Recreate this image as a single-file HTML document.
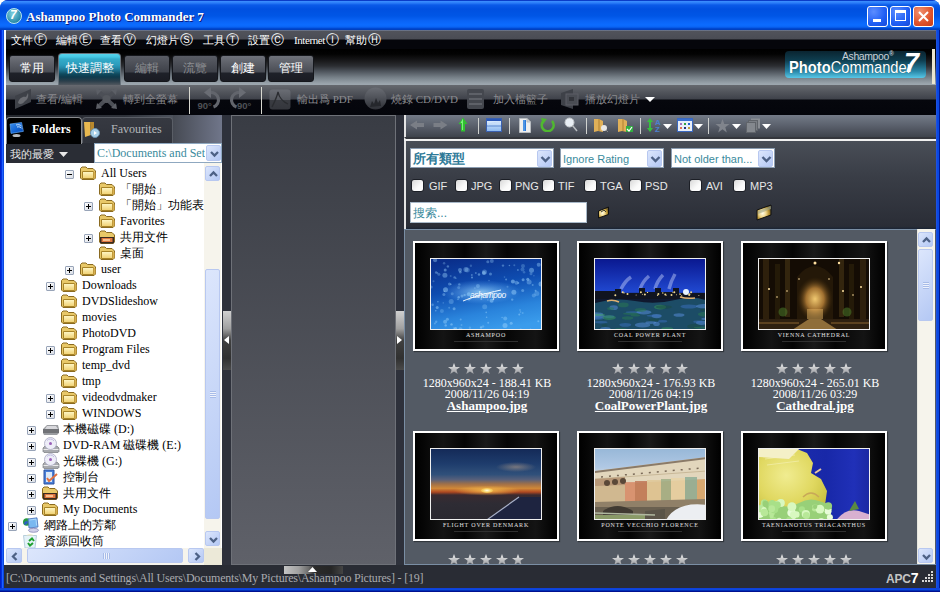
<!DOCTYPE html>
<html><head><meta charset="utf-8">
<style>
*{margin:0;padding:0;box-sizing:border-box}
html,body{width:940px;height:592px;overflow:hidden;background:#fff}
body{position:relative;font-family:"Liberation Sans",sans-serif;font-size:12px}
.a{position:absolute}
#win{left:0;top:0;width:940px;height:592px;background:#0055e5;border-radius:8px 8px 0 0;overflow:hidden}
#title{left:0;top:0;width:940px;height:30px;background:linear-gradient(#0a3cc8 0px,#0a3cc8 1px,#3d90ff 1px,#2a7cf8 3px,#0a5ae8 5px,#0050e0 9px,#0056e6 16px,#0a64f6 21px,#0c6cff 25px,#0a64f4 27px,#0048d0 28.5px,#003cb8 30px)}
#wtxt{left:26px;top:9px;font-family:"Liberation Serif",serif;font-weight:bold;font-size:13px;color:#fff;text-shadow:1px 1px 0 #0a1a80;}
.wb{top:6px;width:21px;height:21px;border:1px solid #fff;border-radius:3px;background:radial-gradient(circle at 30% 25%,#5c8dff,#1f5ef4 60%,#1648d8)}
#client{left:4px;top:30px;width:932px;height:558px;background:#1b1d24}
#menu{left:4px;top:30px;width:932px;height:19px;background:linear-gradient(#8090b0 0px,#51535b 1px,#4a4c54 9px,#05060b 10px,#05060b 19px)}
.mi{top:34px;color:#fff;font-size:11px;line-height:12px;white-space:nowrap}
.mi i{font-style:normal;font-size:12.5px;margin-left:0.5px}
#tabbar{left:4px;top:49px;width:932px;height:36px;background:linear-gradient(#000 0px,#030303 5px,#1a1a1c 12px,#2c2e32 17px,#4c525a 22px,#7a848c 29px,#9ca6ae 35px,#9ca6ae 36px)}
.tab{top:55px;height:27px;border:1px solid #15171c;border-radius:3px;background:linear-gradient(#70737b 0px,#5c5f67 8px,#4a4d55 16px,#1e2129 17px,#1a1c23 25px);color:#fff;font-size:12px;text-align:center;line-height:25px}
.tab.dis{color:#8a8c90;background:linear-gradient(#5a5d65 0px,#4c4f57 8px,#3e4149 16px,#1e2129 17px,#1a1c23 25px)}
#tbar{left:4px;top:85px;width:932px;height:30px;background:linear-gradient(#66696f 0px,#52555c 7px,#3f424a 14px,#06070d 15px,#04050b 30px)}
.tbt{top:92px;color:#8a8a8e;font-size:11px;white-space:nowrap}
#white4{left:4px;top:30px;width:2px;height:535px;background:#f8fcff}
#lhead{left:5px;top:115px;width:217px;height:28px;background:linear-gradient(90deg,#23262d 0px,#2e323a 120px,#6c7380 217px)}
#ldd{left:5px;top:143px;width:217px;height:20px;background:#2a2d35}
#tree{left:5px;top:163px;width:217px;height:402px;background:#fff}
#lstrip{left:222px;top:115px;width:9px;height:450px;background:#2e313b}
#mid{left:231px;top:115px;width:165px;height:450px;background:linear-gradient(#393c44,#5f6169);border:1px solid #6e7178}
#rstrip{left:396px;top:115px;width:8px;height:450px;background:#2e313b}
#rtool{left:404px;top:115px;width:532px;height:22px;background:linear-gradient(#747b88 0px,#5c626e 10px,#3e434c 22px);border-left:2px solid #e4e4e4}
#filter{left:404px;top:137px;width:532px;height:92px;background:linear-gradient(#4a4f58 0%,#3a3e47 40%,#2a2d36 97%,#1a2434 100%);border-top:2px solid #34363c;border-left:2px solid #e4e4e4}
#thumbs{left:404px;top:229px;width:532px;height:336px;background:#535a64;border-left:1px solid #7a8ea4;border-top:1px solid #7a8ea4;border-bottom:1px solid #7a8ea4}
#status{left:4px;top:565px;width:932px;height:23px;background:#292c34}

.tt{font:12px/16px "Liberation Serif",serif;color:#000;white-space:nowrap}
.exp{width:9px;height:9px;border:1px solid #98a4b8;border-radius:1px;background:linear-gradient(135deg,#fff,#d8dce4)}
.exp i{position:absolute;left:1px;top:3px;width:5px;height:1px;background:#000}
.exp b{position:absolute;left:3px;top:1px;width:1px;height:5px;background:#000}
.xpb{border:1px solid #b8c8f0;border-radius:2px;background:linear-gradient(135deg,#dce6fc,#b4c8f4)}

.cmb{background:#fff;border:1px solid #8a9cb0}
.ctx{font-size:11px;color:#3a8a9c;white-space:nowrap}
.chk{width:13px;height:13px;border:1px solid #1c1f26;border-radius:3px;background:linear-gradient(135deg,#d8d8d8,#fafafa 60%,#fff)}
.cl{font-size:11px;color:#e8e8e8}

.frm{width:146px;height:110px;border:2px solid #fff;background:linear-gradient(90deg,#000 0%,#141414 20%,#050505 35%,#1a1a1a 50%,#060606 65%,#141414 85%,#000 100%);box-shadow:1px 1px 1px rgba(0,0,0,.4)}
.pho{left:15px;top:15px;width:112px;height:72px;border:1px solid #f0f0f0;overflow:hidden}
.cap{left:0;top:89px;width:142px;text-align:center;font:6px 'Liberation Serif',serif;color:#e0e0e0;letter-spacing:0.8px}
.cap2{left:39px;top:98px;width:64px;height:1px;background:#303030}
.stars{font-size:13px;color:#c8c8c8;letter-spacing:2px;line-height:12px}
.inf{width:188px;text-align:center;font:12px/11px 'Liberation Serif',serif;color:#fff}
.inf u b{font-weight:bold;font-size:13px}
.hdl{width:8px;height:59px;background:linear-gradient(#d0d0d0 0%,#a0a0a0 30%,#404040 50%,#303030 80%,#4a4a4a 100%)}
</style></head><body>
<svg width="0" height="0" style="position:absolute">
<defs>
<linearGradient id="sg" x1="0" y1="0" x2="0" y2="1"><stop offset="0" stop-color="#f0f0f0"/><stop offset="1" stop-color="#9a9ca0"/></linearGradient>
<linearGradient id="fg" x1="0" y1="0" x2="0" y2="1"><stop offset="0" stop-color="#fff8c8"/><stop offset="1" stop-color="#f0d070"/></linearGradient>
<symbol id="if" viewBox="0 0 18 16"><path d="M0.5 3.5L2 2H6L7.5 3.5H13L15.5 6V13L14 14.5H2L0.5 13Z" fill="#e8c868" stroke="#8a6a20"/><path d="M2.5 6.5H13.5V13.5H2.5Z" fill="url(#fg)" stroke="#a88428"/><path d="M13.5 6.5L15.5 7.5V13L13.5 13.5Z" fill="#d8b050"/></symbol>
<symbol id="is" viewBox="0 0 18 16"><path d="M0.5 3.5L2 2H6L7.5 3.5H13L15.5 6V13L14 14.5H2L0.5 13Z" fill="#e8c868" stroke="#8a6a20"/><path d="M1 8H15V14.5H1Z" fill="#3a2a20"/><path d="M2.5 9H13.5V13H2.5Z" fill="#e07840"/><path d="M4 10H11V12H4Z" fill="#f8c090"/></symbol>
<symbol id="ih" viewBox="0 0 18 16"><path d="M1 8L5 4H16L17 8V12L15 14H2L1 12Z" fill="#9a9ca0"/><path d="M1 8H17V12H1Z" fill="#707276"/><path d="M5 5H14L16 8H3Z" fill="#d8d8dc"/></symbol>
<symbol id="ic" viewBox="0 0 18 16"><path d="M1 11L3 9H15L17 11V14.5L16 15.5H2L1 14.5Z" fill="#a8aaae" stroke="#6a6c70" stroke-width="0.6"/><path d="M1.5 12.5H16.5" stroke="#eaeaea"/><circle cx="8.5" cy="6.5" r="6" fill="#eeeef8" stroke="#a8a8c0" stroke-width="0.8"/><path d="M5 3.5A4.5 4.5 0 0 1 12 4" stroke="#c0c0e0" stroke-width="1" fill="none"/><circle cx="8.5" cy="6.5" r="1.5" fill="#9a60b8"/></symbol>
<symbol id="ip" viewBox="0 0 18 16"><path d="M2 1H12V15H2Z" fill="#4a80d8" stroke="#2a50a0"/><path d="M4 3H10V13H4Z" fill="#dce8f8"/><path d="M5 9L7 12L15 5" stroke="#e07040" stroke-width="2" fill="none"/></symbol>
<symbol id="in" viewBox="0 0 18 16"><circle cx="3.8" cy="5" r="3.8" fill="#2a9a40"/><path d="M1 6C2 4 4 3 5 5C5 7 3 8 1.5 8" fill="#2a60c0"/><path d="M5 2L14 0.8L15 10L6 11Z" fill="#7ab8f0" stroke="#4a70b8" stroke-width="0.8"/><path d="M6.5 3L13 2.2L13.6 8.5" fill="none" stroke="#b8e0ff" stroke-width="0.8"/><ellipse cx="10.5" cy="13.3" rx="5" ry="2" fill="#d0d0e8" stroke="#8a88b8" stroke-width="0.8"/></symbol>
<symbol id="ir" viewBox="0 0 18 16"><path d="M0.5 2.5H13.5L12 15H2Z" fill="#e4f2f8" stroke="#a8c4d4" stroke-width="0.8"/><path d="M3 2.5Q7 0 11 2.5" fill="#f0e8c0"/><path d="M6 8L9 5.5L11 8M10 10L7 12.5L5 10" stroke="#20a030" stroke-width="2" fill="none"/></symbol>
<symbol id="ib" viewBox="0 0 14 14"><path d="M0 0H14" /></symbol>
</defs></svg>
<div id="win" class="a">
 <div id="title" class="a"></div>
 <div id="wtxt" class="a">Ashampoo Photo Commander 7</div>
 <div class="a wb" style="left:867px"></div>
 <div class="a wb" style="left:890px"></div>
 <div class="a wb" style="left:913px;background:radial-gradient(circle at 30% 25%,#f09070,#e0522a 60%,#c83c18)"></div>

 <div class="a" style="left:0;top:30px;width:4px;height:562px;background:linear-gradient(90deg,#0020c8 0,#0020c8 1px,#0030e0 1px,#0030e0 2px,#2060ff 2px,#2060ff 3px,#0a48e0 3px)"></div>
 <div class="a" style="left:936px;top:30px;width:4px;height:562px;background:linear-gradient(90deg,#2050e0 0,#2050e0 1px,#0a48e0 1px,#0a48e0 3px,#001890 3px)"></div>
 <div class="a" style="left:0;top:588px;width:940px;height:4px;background:linear-gradient(#1040d8 0,#1040d8 1px,#0a48e0 1px,#0a48e0 2px,#0030b8 2px,#0030b8 3px,#001090 3px)"></div>
 <div id="client" class="a"></div>
 <div id="menu" class="a"></div>
 <div id="tabbar" class="a"></div>
 <div id="tbar" class="a"></div>
 <div id="lhead" class="a"></div>
 <div id="ldd" class="a"></div>
 <div id="tree" class="a"></div>
 <div id="lstrip" class="a"></div>
 <div id="mid" class="a"></div>
 <div id="rstrip" class="a"></div>
 <div id="rtool" class="a"></div>
 <div id="filter" class="a"></div>
 <div id="thumbs" class="a"></div>
 <div id="status" class="a"></div>

 <!-- app icon -->
 <div class="a" style="left:6px;top:8px;width:16px;height:16px;border-radius:50%;background:radial-gradient(circle at 40% 35%,#7fd0e0,#2a8aa8 70%,#1e6a88);border:1px solid #b8e4f0"></div>
 <div class="a" style="left:10px;top:8px;width:10px;font:bold 12px 'Liberation Sans',sans-serif;color:#fff;font-style:italic">7</div>
 <!-- window buttons glyphs -->
 <div class="a" style="left:873px;top:19px;width:8px;height:3px;background:#fff"></div>
 <div class="a" style="left:895px;top:10px;width:11px;height:11px;border:1px solid #fff;border-top-width:3px"></div>
 <svg class="a" style="left:913px;top:6px" width="21" height="21"><path d="M6 6L15 15M15 6L6 15" stroke="#fff" stroke-width="2"/></svg>
 <!-- menu -->
 <div class="a mi" style="left:11px">文件<i>Ⓕ</i></div>
 <div class="a mi" style="left:56px">編輯<i>Ⓔ</i></div>
 <div class="a mi" style="left:100px">查看<i>Ⓥ</i></div>
 <div class="a mi" style="left:146px">幻燈片<i>Ⓢ</i></div>
 <div class="a mi" style="left:203px">工具<i>Ⓣ</i></div>
 <div class="a mi" style="left:248px">設置<i>Ⓒ</i></div>
 <div class="a mi" style="left:294px;font-family:'Liberation Serif',serif;font-size:11px;letter-spacing:-0.4px">Internet<i>Ⓘ</i></div>
 <div class="a mi" style="left:345px">幫助<i>Ⓗ</i></div>
 <!-- tabs -->
 <div class="a tab" style="left:9px;width:46px">常用</div>
 <div class="a tab" style="left:58px;top:53px;width:63px;height:32px;border:1px solid #0e4050;border-bottom:none;border-radius:4px 4px 0 0;border-color:#68737c;background:linear-gradient(#58d4ec 0px,#44c8e4 3px,#34acca 5px,#2c9cbc 11px,#2488a8 14px,#186078 18px,#0f4a5e 20px,#0e3a4c 23px,#2a3e4a 27px,#52585f 31px,#62656d 32px);line-height:28px">快速調整</div>
 <div class="a tab dis" style="left:124px;width:46px">編輯</div>
 <div class="a tab dis" style="left:172px;width:46px">流覽</div>
 <div class="a tab" style="left:220px;width:46px">創建</div>
 <div class="a tab" style="left:268px;width:46px">管理</div>
 <!-- toolbar -->
 <svg class="a" style="left:14px;top:88px" width="18" height="22"><path d="M1 8L17 1V14L1 21Z" fill="#3e4148"/><path d="M4 15C5 10 9 8 12 9L14 5C15 9 13 12 11 13C9 16 6 17 4 15Z" fill="#6a6c72"/></svg>
 <svg class="a" style="left:95px;top:88px" width="23" height="22"><path d="M3 3L20 19M20 3L3 19" stroke="#4c4f56" stroke-width="4"/><path d="M1 1L7 2L2 7ZM22 1L16 2L21 7ZM1 21L7 20L2 15ZM22 21L16 20L21 15Z" fill="#5c5f66"/><circle cx="11.5" cy="11" r="4" fill="#55585e"/></svg>
 <svg class="a" style="left:196px;top:86px" width="26" height="25"><path d="M14 6.5A7.5 7.5 0 0 1 17.5 21" stroke="#62656c" stroke-width="3.2" fill="none"/><path d="M8 6.5L15 1V12Z" fill="#6a6d74"/><text x="1.5" y="22.5" font-family="Liberation Sans" font-size="9.5" font-weight="bold" fill="#4e5156">90°</text></svg>
 <svg class="a" style="left:227px;top:86px" width="27" height="25"><path d="M13 6.5A7.5 7.5 0 0 0 9.5 21" stroke="#62656c" stroke-width="3.2" fill="none"/><path d="M19 6.5L12 1V12Z" fill="#6a6d74"/><text x="10" y="22.5" font-family="Liberation Sans" font-size="9.5" font-weight="bold" fill="#4e5156">90°</text></svg>
 <svg class="a" style="left:269px;top:89px" width="22" height="21"><defs><linearGradient id="pg" x1="0" y1="0" x2="0" y2="1"><stop offset="0" stop-color="#6a6d74"/><stop offset="0.5" stop-color="#55585f"/><stop offset="0.52" stop-color="#3a3c42"/><stop offset="1" stop-color="#34363c"/></linearGradient></defs><rect x="0.5" y="0.5" width="21" height="20" rx="3" fill="url(#pg)"/><path d="M3 18C5 14 8 8 9 3C10 8 14 13 19 15" stroke="#2a2c30" stroke-width="1.3" fill="none"/></svg>
 <svg class="a" style="left:364px;top:87px" width="23" height="23"><defs><linearGradient id="cg" x1="0" y1="0" x2="0" y2="1"><stop offset="0" stop-color="#6a6d74"/><stop offset="0.55" stop-color="#4a4d54"/><stop offset="1" stop-color="#2e3036"/></linearGradient></defs><circle cx="11.5" cy="11.5" r="11" fill="url(#cg)"/><path d="M6 20L8 14L10 17L12 11L14 16L16 13L17 19Z" fill="#25272c"/></svg>
 <svg class="a" style="left:466px;top:88px" width="19" height="22"><rect x="1" y="1" width="17" height="20" rx="2" fill="#44474e"/><path d="M3 6H16M3 11H16M3 16H16" stroke="#5e6168" stroke-width="2"/></svg>
 <svg class="a" style="left:560px;top:88px" width="20" height="22"><path d="M1 5L13 1V21L1 17Z" fill="#3e4148"/><rect x="6" y="6" width="12" height="11" fill="#4a4d54" stroke="#5c5f66"/><rect x="9" y="9" width="5" height="4" fill="#33353b"/></svg>

 <div class="a tbt" style="left:36px">查看/編輯</div>
 <div class="a tbt" style="left:123px">轉到全螢幕</div>
 <div class="a" style="left:189px;top:87px;width:1px;height:27px;background:#d8d8d0"></div>
 <div class="a" style="left:261px;top:87px;width:1px;height:27px;background:#d8d8d0"></div>
 <div class="a tbt" style="left:297px;font-family:'Liberation Serif',serif">輸出爲 PDF</div>
 <div class="a tbt" style="left:391px;font-family:'Liberation Serif',serif">燒錄 CD/DVD</div>
 <div class="a tbt" style="left:493px">加入檔籃子</div>
 <div class="a tbt" style="left:585px">播放幻燈片</div>
 <svg class="a" style="left:645px;top:97px" width="10" height="5"><path d="M0 0H10L5 5Z" fill="#fff"/></svg>

 <!-- left panel -->
 <div class="a" style="left:173px;top:115px;width:49px;height:28px;background:linear-gradient(90deg,#464a53,#70768a)"></div>
 <div class="a" style="left:6px;top:117px;width:76px;height:27px;background:#000;border:1px solid #8a8c90;border-bottom:none;border-radius:4px 4px 0 0"></div>
 <div class="a" style="left:82px;top:117px;width:91px;height:26px;background:linear-gradient(#363941,#30333b);border:1px solid #5a5e66;border-bottom:none;border-radius:4px 4px 0 0"></div>
 <svg class="a" style="left:9px;top:121px" width="17" height="17"><defs><linearGradient id="mg" x1="0" y1="0" x2="1" y2="1"><stop offset="0" stop-color="#3a90f0"/><stop offset="0.6" stop-color="#1060d0"/><stop offset="1" stop-color="#0a48b0"/></linearGradient></defs><path d="M1 3L12.6 1.5L14.4 10.4L2 12.4Z" fill="url(#mg)" stroke="#6ab0f8" stroke-width="0.6"/><path d="M7 4C9 3.5 11 3.5 12.5 5M8 6C10 5.5 12 6 13 7.5" stroke="#e0f4ff" stroke-width="0.9" fill="none"/><ellipse cx="7.5" cy="14.5" rx="4" ry="1.6" fill="#b8bcc0"/></svg>
 <div class="a" style="left:32px;top:122px;font:bold 12px 'Liberation Serif',serif;color:#fff">Folders</div>
 <svg class="a" style="left:83px;top:122px" width="17" height="17"><path d="M1 0H7L8 13L2 15Z" fill="#e8b850"/><path d="M7 0H11V12L8 13Z" fill="#b8882c"/><circle cx="12" cy="11" r="4.5" fill="#a8d0e8" stroke="#6890b0"/><path d="M11 9L14 11L11 13Z" fill="#fff"/></svg>
 <div class="a" style="left:111px;top:122px;font:12px 'Liberation Serif',serif;color:#b4b6ba">Favourites</div>
 <div class="a" style="left:10px;top:147px;font-size:11px;color:#e8e8e8">我的最愛</div>
 <svg class="a" style="left:59px;top:152px" width="9" height="5"><path d="M0 0H9L4.5 5Z" fill="#e8e8e8"/></svg>
 <div class="a" style="left:94px;top:143px;width:128px;height:20px;background:#fff;border:1px solid #8fa8c0"></div>
 <div class="a" style="left:97px;top:146px;width:108px;overflow:hidden;white-space:nowrap;font:12px 'Liberation Serif',serif;color:#3a8a9c">C:\Documents and Settings</div>
 <div class="a xpb" style="left:206px;top:145px;width:15px;height:16px"><svg width="15" height="16"><path d="M4 6L7.5 9.5L11 6" stroke="#4d6185" stroke-width="2.3" fill="none"/></svg></div>
 <div class="a" style="left:5px;top:163px;width:199px;height:385px;overflow:hidden">
<div class="a exp" style="left:60px;top:7px"><i></i></div>
<svg class="a" style="left:75px;top:2px" width="18" height="16"><use href="#if"/></svg>
<div class="a tt" style="left:96px;top:2px">All Users</div>
<svg class="a" style="left:94px;top:18px" width="18" height="16"><use href="#if"/></svg>
<div class="a tt" style="left:115px;top:18px">「開始」</div>
<div class="a exp" style="left:79px;top:39px"><i></i><b></b></div>
<svg class="a" style="left:94px;top:34px" width="18" height="16"><use href="#if"/></svg>
<div class="a tt" style="left:115px;top:34px">「開始」功能表</div>
<svg class="a" style="left:94px;top:50px" width="18" height="16"><use href="#if"/></svg>
<div class="a tt" style="left:115px;top:50px">Favorites</div>
<div class="a exp" style="left:79px;top:71px"><i></i><b></b></div>
<svg class="a" style="left:94px;top:66px" width="18" height="16"><use href="#is"/></svg>
<div class="a tt" style="left:115px;top:66px">共用文件</div>
<svg class="a" style="left:94px;top:82px" width="18" height="16"><use href="#if"/></svg>
<div class="a tt" style="left:115px;top:82px">桌面</div>
<div class="a exp" style="left:60px;top:103px"><i></i><b></b></div>
<svg class="a" style="left:75px;top:98px" width="18" height="16"><use href="#if"/></svg>
<div class="a tt" style="left:96px;top:98px">user</div>
<div class="a exp" style="left:41px;top:119px"><i></i><b></b></div>
<svg class="a" style="left:56px;top:114px" width="18" height="16"><use href="#if"/></svg>
<div class="a tt" style="left:77px;top:114px">Downloads</div>
<svg class="a" style="left:56px;top:130px" width="18" height="16"><use href="#if"/></svg>
<div class="a tt" style="left:77px;top:130px">DVDSlideshow</div>
<svg class="a" style="left:56px;top:146px" width="18" height="16"><use href="#if"/></svg>
<div class="a tt" style="left:77px;top:146px">movies</div>
<svg class="a" style="left:56px;top:162px" width="18" height="16"><use href="#if"/></svg>
<div class="a tt" style="left:77px;top:162px">PhotoDVD</div>
<div class="a exp" style="left:41px;top:183px"><i></i><b></b></div>
<svg class="a" style="left:56px;top:178px" width="18" height="16"><use href="#if"/></svg>
<div class="a tt" style="left:77px;top:178px">Program Files</div>
<svg class="a" style="left:56px;top:194px" width="18" height="16"><use href="#if"/></svg>
<div class="a tt" style="left:77px;top:194px">temp_dvd</div>
<svg class="a" style="left:56px;top:210px" width="18" height="16"><use href="#if"/></svg>
<div class="a tt" style="left:77px;top:210px">tmp</div>
<div class="a exp" style="left:41px;top:231px"><i></i><b></b></div>
<svg class="a" style="left:56px;top:226px" width="18" height="16"><use href="#if"/></svg>
<div class="a tt" style="left:77px;top:226px">videodvdmaker</div>
<div class="a exp" style="left:41px;top:247px"><i></i><b></b></div>
<svg class="a" style="left:56px;top:242px" width="18" height="16"><use href="#if"/></svg>
<div class="a tt" style="left:77px;top:242px">WINDOWS</div>
<div class="a exp" style="left:22px;top:263px"><i></i><b></b></div>
<svg class="a" style="left:37px;top:258px" width="18" height="16"><use href="#ih"/></svg>
<div class="a tt" style="left:58px;top:258px">本機磁碟 (D:)</div>
<div class="a exp" style="left:22px;top:279px"><i></i><b></b></div>
<svg class="a" style="left:37px;top:274px" width="18" height="16"><use href="#ic"/></svg>
<div class="a tt" style="left:58px;top:274px">DVD-RAM 磁碟機 (E:)</div>
<div class="a exp" style="left:22px;top:295px"><i></i><b></b></div>
<svg class="a" style="left:37px;top:290px" width="18" height="16"><use href="#ic"/></svg>
<div class="a tt" style="left:58px;top:290px">光碟機 (G:)</div>
<div class="a exp" style="left:22px;top:311px"><i></i><b></b></div>
<svg class="a" style="left:37px;top:306px" width="18" height="16"><use href="#ip"/></svg>
<div class="a tt" style="left:58px;top:306px">控制台</div>
<div class="a exp" style="left:22px;top:327px"><i></i><b></b></div>
<svg class="a" style="left:37px;top:322px" width="18" height="16"><use href="#is"/></svg>
<div class="a tt" style="left:58px;top:322px">共用文件</div>
<div class="a exp" style="left:22px;top:343px"><i></i><b></b></div>
<svg class="a" style="left:37px;top:338px" width="18" height="16"><use href="#if"/></svg>
<div class="a tt" style="left:58px;top:338px">My Documents</div>
<div class="a exp" style="left:3px;top:359px"><i></i><b></b></div>
<svg class="a" style="left:18px;top:354px" width="18" height="16"><use href="#in"/></svg>
<div class="a tt" style="left:39px;top:354px">網路上的芳鄰</div>
<svg class="a" style="left:18px;top:370px" width="18" height="16"><use href="#ir"/></svg>
<div class="a tt" style="left:39px;top:370px">資源回收筒</div>
 </div>
 <div class="a" style="left:204px;top:163px;width:18px;height:385px;background:#f6f4ec;border-right:1px solid #fff"></div>
 <div class="a xpb" style="left:205px;top:166px;width:15px;height:15px"><svg width="15" height="15"><path d="M4 9L7.5 5.5L11 9" stroke="#4d6185" stroke-width="2.3" fill="none"/></svg></div>
 <div class="a xpb" style="left:205px;top:269px;width:15px;height:250px"><div class="a" style="left:4px;top:121px;width:6px;height:7px;background:repeating-linear-gradient(#a8bce8 0 1px,#eef2fc 1px 2px)"></div></div>
 <div class="a xpb" style="left:205px;top:531px;width:15px;height:15px"><svg width="15" height="15"><path d="M4 6L7.5 9.5L11 6" stroke="#4d6185" stroke-width="2.3" fill="none"/></svg></div>
 <div class="a" style="left:5px;top:548px;width:199px;height:17px;background:#f6f4ec"></div>
 <div class="a" style="left:204px;top:548px;width:18px;height:17px;background:#ece9d8"></div>
 <div class="a xpb" style="left:6px;top:548px;width:16px;height:15px"><svg width="16" height="15"><path d="M9.5 4L6 7.5L9.5 11" stroke="#4d6185" stroke-width="2.3" fill="none"/></svg></div>
 <div class="a xpb" style="left:27px;top:548px;width:156px;height:15px"><div class="a" style="left:75px;top:4px;width:7px;height:6px;background:repeating-linear-gradient(90deg,#a8bce8 0 1px,#eef2fc 1px 2px)"></div></div>
 <div class="a xpb" style="left:188px;top:548px;width:16px;height:15px"><svg width="16" height="15"><path d="M6.5 4L10 7.5L6.5 11" stroke="#4d6185" stroke-width="2.3" fill="none"/></svg></div>

 <!-- right toolbar -->
 <div class="a" style="left:404px;top:139px;width:532px;height:2px;background:#f0f0f0"></div>
 <svg class="a" style="left:410px;top:120px" width="14" height="10"><path d="M0 5L7 0.5V3H14V7H7V9.5Z" fill="#7a7e86"/></svg>
 <svg class="a" style="left:433px;top:120px" width="15" height="10"><path d="M14.5 5L7.5 0.5V3H0.5V7H7.5V9.5Z" fill="#7a7e86"/></svg>
 <svg class="a" style="left:458px;top:117px" width="10" height="15"><path d="M5 0.5L9.5 7H7V14.5H3V7H0.5Z" fill="#30c030"/><path d="M5 1.5L2.5 6H4V13H5Z" fill="#80f080"/></svg>
<div class="a" style="left:478px;top:118px;width:1px;height:16px;background:#d0d2d0"></div>
 <svg class="a" style="left:486px;top:118px" width="16" height="14"><defs><linearGradient id="vg" x1="0" y1="0" x2="0" y2="1"><stop offset="0" stop-color="#f0f8ff"/><stop offset="1" stop-color="#8ab8f0"/></linearGradient></defs><rect x="0.5" y="0.5" width="15" height="13" fill="url(#vg)" stroke="#3a60b0"/><rect x="1" y="1" width="14" height="2" fill="#2a58b8"/><path d="M1 8H15" stroke="#5a88d0"/><path d="M2 7C5 5 9 4 14 4" stroke="#c0d8f8" stroke-width="0.8" fill="none"/></svg>
<div class="a" style="left:509px;top:118px;width:1px;height:16px;background:#d0d2d0"></div>
 <svg class="a" style="left:519px;top:118px" width="12" height="15"><path d="M0.5 0.5H8L11.5 4V14.5H0.5Z" fill="#eeeeee" stroke="#b8bcc0"/><path d="M8 0.5V4H11.5" fill="#d0d0d0" stroke="#b8bcc0"/><rect x="4" y="2" width="3" height="11" fill="#2a78d8"/><rect x="4.5" y="2" width="1" height="11" fill="#70b0f0"/></svg>
 <svg class="a" style="left:540px;top:118px" width="16" height="14"><path d="M4 2.5A6 6 0 1 0 12 3" stroke="#50b830" stroke-width="2.5" fill="none"/><path d="M1 0L7 1L3 6Z" fill="#50b830"/></svg>
 <svg class="a" style="left:564px;top:117px" width="14" height="16"><circle cx="5.5" cy="5.5" r="4.5" fill="#e8eef4" stroke="#c0c4c8"/><path d="M8.5 8.5L13 14" stroke="#b8bcc0" stroke-width="1.5"/></svg>
<div class="a" style="left:586px;top:118px;width:1px;height:16px;background:#d0d2d0"></div>
 <svg class="a" style="left:593px;top:118px" width="16" height="15"><path d="M1 1H6L10 3V14L5 13L1 14Z" fill="#e0b058"/><path d="M6 1V13" stroke="#b08030"/><circle cx="11" cy="10" r="3" fill="#e8e8e8"/><path d="M13 12L15 14" stroke="#888"/></svg>
 <svg class="a" style="left:617px;top:118px" width="17" height="15"><path d="M1 1H6L10 3V14L5 13L1 14Z" fill="#e0b058"/><path d="M6 1V13" stroke="#b08030"/><rect x="9" y="8" width="7" height="6" fill="#30b040"/><path d="M10 11L12 13L15 9" stroke="#fff" stroke-width="1.2" fill="none"/></svg>
<div class="a" style="left:640px;top:118px;width:1px;height:16px;background:#d0d2d0"></div>
 <svg class="a" style="left:647px;top:118px" width="16" height="14"><path d="M3 0L6 4H4V10H6L3 14L0 10H2V4H0Z" fill="#38c040"/><text x="8" y="7" font-family="Liberation Sans" font-size="8" font-weight="bold" fill="#4a80d0">A</text><text x="8" y="14" font-family="Liberation Sans" font-size="8" font-weight="bold" fill="#4a80d0">Z</text></svg>
<svg class="a" style="left:663px;top:124px" width="9" height="5"><path d="M0 0H9L4.5 5Z" fill="#fff"/></svg>
 <svg class="a" style="left:677px;top:118px" width="16" height="14"><rect x="0.5" y="0.5" width="15" height="13" fill="#e8eef8" stroke="#3a68c0"/><rect x="1" y="1" width="14" height="2" fill="#3a70d0"/><rect x="3" y="5" width="2" height="2" fill="#a070c0"/><rect x="7" y="5" width="2" height="2" fill="#30a040"/><rect x="11" y="5" width="2" height="2" fill="#2060d0"/><rect x="3" y="9" width="2" height="2" fill="#e07050"/><rect x="7" y="9" width="2" height="2" fill="#203080"/><rect x="11" y="9" width="2" height="2" fill="#c0a040"/></svg>
<svg class="a" style="left:694px;top:124px" width="9" height="5"><path d="M0 0H9L4.5 5Z" fill="#fff"/></svg><div class="a" style="left:708px;top:118px;width:1px;height:16px;background:#d0d2d0"></div>
 <svg class="a" style="left:715px;top:119px" width="15" height="14"><path d="M7.5 0L9.3 5H14.5L10.3 8.2L11.8 13.5L7.5 10.3L3.2 13.5L4.7 8.2L0.5 5H5.7Z" fill="#80848c"/></svg>
<svg class="a" style="left:732px;top:124px" width="9" height="5"><path d="M0 0H9L4.5 5Z" fill="#fff"/></svg>
 <svg class="a" style="left:746px;top:118px" width="15" height="15"><rect x="5" y="0.5" width="9" height="10" fill="#8a8e94"/><rect x="2.5" y="2.5" width="9" height="10" fill="#7a7e84" stroke="#60646a"/><rect x="0.5" y="4.5" width="9" height="10" fill="#84888e" stroke="#60646a"/></svg>
<svg class="a" style="left:762px;top:124px" width="9" height="5"><path d="M0 0H9L4.5 5Z" fill="#fff"/></svg>
 <!-- filter -->
 <div class="a cmb" style="left:410px;top:148px;width:144px;height:20px"></div>
 <div class="a" style="left:413px;top:150px;font-size:13px;font-weight:bold;color:#2e7a98">所有類型</div>
 <div class="a xpb" style="left:537px;top:150px;width:15px;height:17px"><svg width="15" height="17"><path d="M3.5 6L7.5 10L11.5 6" stroke="#4d6185" stroke-width="2.4" fill="none"/></svg></div>
 <div class="a cmb" style="left:560px;top:148px;width:104px;height:20px"></div>
 <div class="a ctx" style="left:563px;top:153px">Ignore Rating</div>
 <div class="a xpb" style="left:647px;top:150px;width:15px;height:17px"><svg width="15" height="17"><path d="M3.5 6L7.5 10L11.5 6" stroke="#4d6185" stroke-width="2.4" fill="none"/></svg></div>
 <div class="a cmb" style="left:671px;top:148px;width:104px;height:20px"></div>
 <div class="a ctx" style="left:674px;top:153px">Not older than...</div>
 <div class="a xpb" style="left:758px;top:150px;width:15px;height:17px"><svg width="15" height="17"><path d="M3.5 6L7.5 10L11.5 6" stroke="#4d6185" stroke-width="2.4" fill="none"/></svg></div>
 <div class="a chk" style="left:411px;top:179px"></div><div class="a cl" style="left:429px;top:180px">GIF</div>
 <div class="a chk" style="left:455px;top:179px"></div><div class="a cl" style="left:471px;top:180px">JPG</div>
 <div class="a chk" style="left:499px;top:179px"></div><div class="a cl" style="left:515px;top:180px">PNG</div>
 <div class="a chk" style="left:542px;top:179px"></div><div class="a cl" style="left:558px;top:180px">TIF</div>
 <div class="a chk" style="left:584px;top:179px"></div><div class="a cl" style="left:600px;top:180px">TGA</div>
 <div class="a chk" style="left:629px;top:179px"></div><div class="a cl" style="left:645px;top:180px">PSD</div>
 <div class="a chk" style="left:689px;top:179px"></div><div class="a cl" style="left:706px;top:180px">AVI</div>
 <div class="a chk" style="left:733px;top:179px"></div><div class="a cl" style="left:750px;top:180px">MP3</div>

 <div class="a" style="left:410px;top:202px;width:177px;height:21px;background:#fff;border:1px solid #a8b8c8"></div>
 <div class="a" style="left:413px;top:205px;font-size:12px;color:#3a8a9c">搜索...</div>
 <svg class="a" style="left:597px;top:206px" width="13" height="13"><defs><radialGradient id="gd" cx="0.4" cy="0.55" r="0.6"><stop offset="0" stop-color="#fffce8"/><stop offset="0.4" stop-color="#f0d890"/><stop offset="0.8" stop-color="#b08a28"/><stop offset="1" stop-color="#6a5a30"/></radialGradient></defs><path d="M1.5 5L11.5 1V8.5L1.5 12Z" fill="url(#gd)" stroke="#101010" stroke-width="1"/><path d="M4 6L7 4L9 6" stroke="#3a3a30" stroke-width="1" fill="none"/></svg>
 <svg class="a" style="left:756px;top:204px" width="16" height="17"><path d="M1 6L15 1V11L1 16Z" fill="url(#gd)" stroke="#101010" stroke-width="1"/><path d="M2 7L15 2V5L2 10Z" fill="#a0a890" opacity="0.6"/></svg>

 <!-- thumbnails -->
 <div class="a" style="left:405px;top:229px;width:512px;height:335px;overflow:hidden">
<div class="a frm" style="left:8px;top:12px"><div class="a pho" style="background:#000"><svg class="a" style="left:0;top:0" width="112" height="73"><defs><linearGradient id="b1" x1="0.2" y1="0" x2="0.5" y2="1"><stop offset="0" stop-color="#0a2e8a"/><stop offset="0.4" stop-color="#0e4cb0"/><stop offset="0.75" stop-color="#2a84dc"/><stop offset="1" stop-color="#3a9cec"/></linearGradient><radialGradient id="g1" cx="0.5" cy="0.5" r="0.5"><stop offset="0" stop-color="rgba(170,225,255,.75)"/><stop offset="1" stop-color="rgba(100,180,255,0)"/></radialGradient></defs>
<rect width="112" height="73" fill="url(#b1)"/><ellipse cx="50" cy="33" rx="40" ry="12" fill="url(#g1)"/><circle cx="36.3" cy="11.0" r="2.5" fill="rgba(160,215,255,0.26)"/><circle cx="92.0" cy="6.9" r="2.0" fill="rgba(160,215,255,0.26)"/><circle cx="56.8" cy="2.7" r="1.5" fill="rgba(160,215,255,0.35)"/><circle cx="27.0" cy="40.2" r="0.8" fill="rgba(160,215,255,0.46)"/><circle cx="13.9" cy="16.3" r="2.5" fill="rgba(160,215,255,0.40)"/><circle cx="6.9" cy="42.7" r="0.8" fill="rgba(160,215,255,0.49)"/><circle cx="5.2" cy="62.7" r="1.2" fill="rgba(160,215,255,0.35)"/><circle cx="60.6" cy="41.7" r="2.0" fill="rgba(160,215,255,0.45)"/><circle cx="20.2" cy="42.5" r="2.5" fill="rgba(160,215,255,0.30)"/><circle cx="10.9" cy="52.0" r="2.0" fill="rgba(160,215,255,0.26)"/><circle cx="23.1" cy="49.7" r="1.5" fill="rgba(160,215,255,0.44)"/><circle cx="52.1" cy="67.4" r="1.2" fill="rgba(160,215,255,0.32)"/><circle cx="89.0" cy="51.0" r="1.0" fill="rgba(160,215,255,0.27)"/><circle cx="33.6" cy="36.1" r="1.2" fill="rgba(160,215,255,0.43)"/><circle cx="32.2" cy="71.6" r="0.8" fill="rgba(160,215,255,0.38)"/><circle cx="18.5" cy="25.0" r="1.5" fill="rgba(160,215,255,0.36)"/><circle cx="107.7" cy="5.7" r="2.0" fill="rgba(160,215,255,0.39)"/><circle cx="98.1" cy="22.9" r="2.5" fill="rgba(160,215,255,0.34)"/><circle cx="55.6" cy="58.2" r="0.8" fill="rgba(160,215,255,0.46)"/><circle cx="105.8" cy="34.6" r="2.5" fill="rgba(160,215,255,0.27)"/><circle cx="81.9" cy="22.6" r="2.0" fill="rgba(160,215,255,0.50)"/><circle cx="92.1" cy="20.8" r="1.5" fill="rgba(160,215,255,0.47)"/><circle cx="38.9" cy="68.7" r="1.2" fill="rgba(160,215,255,0.29)"/><circle cx="13.1" cy="4.3" r="1.2" fill="rgba(160,215,255,0.28)"/><circle cx="27.7" cy="28.5" r="1.5" fill="rgba(160,215,255,0.27)"/><circle cx="50.3" cy="40.1" r="1.0" fill="rgba(160,215,255,0.45)"/><circle cx="96.8" cy="20.3" r="1.5" fill="rgba(160,215,255,0.50)"/><circle cx="76.5" cy="27.8" r="1.0" fill="rgba(160,215,255,0.29)"/><circle cx="19.7" cy="16.9" r="1.0" fill="rgba(160,215,255,0.25)"/><circle cx="93.1" cy="13.3" r="1.2" fill="rgba(160,215,255,0.25)"/><circle cx="46.9" cy="27.0" r="2.0" fill="rgba(160,215,255,0.33)"/><circle cx="14.1" cy="62.7" r="2.0" fill="rgba(160,215,255,0.41)"/><circle cx="82.9" cy="33.3" r="2.5" fill="rgba(160,215,255,0.45)"/><circle cx="43.9" cy="29.1" r="0.8" fill="rgba(160,215,255,0.37)"/><circle cx="44.8" cy="13.9" r="1.0" fill="rgba(160,215,255,0.36)"/><circle cx="12.3" cy="43.9" r="0.8" fill="rgba(160,215,255,0.25)"/><circle cx="16.9" cy="7.4" r="1.2" fill="rgba(160,215,255,0.40)"/><circle cx="7.9" cy="15.2" r="1.5" fill="rgba(160,215,255,0.29)"/><circle cx="28.3" cy="25.4" r="1.2" fill="rgba(160,215,255,0.37)"/><circle cx="12.9" cy="35.6" r="1.5" fill="rgba(160,215,255,0.37)"/><circle cx="34.9" cy="10.5" r="2.5" fill="rgba(160,215,255,0.34)"/><circle cx="29.7" cy="60.5" r="1.0" fill="rgba(160,215,255,0.38)"/><circle cx="23.0" cy="69.5" r="1.2" fill="rgba(160,215,255,0.29)"/><circle cx="60.8" cy="2.0" r="2.0" fill="rgba(160,215,255,0.32)"/><circle cx="72.0" cy="6.6" r="1.2" fill="rgba(160,215,255,0.38)"/><circle cx="101.7" cy="26.0" r="1.0" fill="rgba(160,215,255,0.38)"/><circle cx="87.3" cy="24.1" r="1.0" fill="rgba(160,215,255,0.40)"/><circle cx="88.3" cy="55.4" r="1.0" fill="rgba(160,215,255,0.45)"/><circle cx="91.7" cy="54.0" r="1.0" fill="rgba(160,215,255,0.30)"/><circle cx="55.2" cy="53.4" r="0.8" fill="rgba(160,215,255,0.45)"/><circle cx="52.9" cy="14.1" r="2.0" fill="rgba(160,215,255,0.49)"/><circle cx="50.1" cy="68.4" r="1.2" fill="rgba(160,215,255,0.49)"/><circle cx="40.8" cy="16.1" r="1.0" fill="rgba(160,215,255,0.37)"/><circle cx="37.8" cy="35.2" r="2.0" fill="rgba(160,215,255,0.46)"/><circle cx="53.7" cy="47.7" r="2.5" fill="rgba(160,215,255,0.27)"/><circle cx="74.0" cy="66.4" r="2.5" fill="rgba(160,215,255,0.44)"/><circle cx="53.5" cy="13.0" r="2.5" fill="rgba(160,215,255,0.33)"/><circle cx="89.7" cy="70.9" r="1.5" fill="rgba(160,215,255,0.37)"/><circle cx="83.3" cy="6.2" r="1.0" fill="rgba(160,215,255,0.29)"/><circle cx="14.2" cy="11.0" r="1.5" fill="rgba(160,215,255,0.45)"/><circle cx="16.4" cy="60.3" r="1.5" fill="rgba(160,215,255,0.41)"/><circle cx="39.2" cy="40.1" r="1.0" fill="rgba(160,215,255,0.26)"/><circle cx="89.5" cy="53.0" r="0.8" fill="rgba(160,215,255,0.38)"/><circle cx="104.6" cy="31.7" r="1.0" fill="rgba(160,215,255,0.46)"/><circle cx="23.6" cy="18.4" r="1.2" fill="rgba(160,215,255,0.38)"/><circle cx="85.5" cy="23.8" r="2.0" fill="rgba(160,215,255,0.35)"/><circle cx="14.7" cy="66.4" r="1.2" fill="rgba(160,215,255,0.47)"/><circle cx="74.2" cy="59.5" r="2.0" fill="rgba(160,215,255,0.36)"/><circle cx="102.8" cy="36.6" r="2.0" fill="rgba(160,215,255,0.29)"/><circle cx="57.2" cy="63.7" r="1.0" fill="rgba(160,215,255,0.40)"/><circle cx="86.9" cy="10.9" r="1.0" fill="rgba(160,215,255,0.37)"/><circle cx="81.2" cy="40.6" r="1.2" fill="rgba(160,215,255,0.42)"/><circle cx="59.4" cy="35.2" r="0.8" fill="rgba(160,215,255,0.47)"/><circle cx="6.4" cy="14.0" r="0.8" fill="rgba(160,215,255,0.44)"/><circle cx="56.9" cy="41.0" r="0.8" fill="rgba(160,215,255,0.36)"/><circle cx="68.6" cy="36.9" r="2.0" fill="rgba(160,215,255,0.30)"/><circle cx="31.0" cy="37.1" r="1.5" fill="rgba(160,215,255,0.38)"/><circle cx="27.7" cy="38.2" r="1.2" fill="rgba(160,215,255,0.48)"/><circle cx="100.0" cy="14.8" r="1.5" fill="rgba(160,215,255,0.28)"/><circle cx="13.6" cy="32.3" r="0.8" fill="rgba(160,215,255,0.42)"/><circle cx="48.0" cy="15.5" r="1.2" fill="rgba(160,215,255,0.45)"/><circle cx="100.5" cy="11.3" r="2.5" fill="rgba(160,215,255,0.41)"/><circle cx="41.0" cy="18.5" r="1.0" fill="rgba(160,215,255,0.49)"/><circle cx="24.6" cy="69.5" r="1.5" fill="rgba(160,215,255,0.47)"/><circle cx="18.2" cy="48.8" r="1.0" fill="rgba(160,215,255,0.29)"/><circle cx="48.3" cy="37.6" r="1.2" fill="rgba(160,215,255,0.36)"/><circle cx="39.9" cy="6.7" r="1.2" fill="rgba(160,215,255,0.25)"/><circle cx="62.1" cy="32.2" r="0.8" fill="rgba(160,215,255,0.35)"/><circle cx="58.0" cy="21.6" r="0.8" fill="rgba(160,215,255,0.28)"/><circle cx="102.9" cy="16.7" r="0.8" fill="rgba(160,215,255,0.27)"/><circle cx="30.5" cy="66.1" r="1.0" fill="rgba(160,215,255,0.32)"/><circle cx="14.5" cy="30.8" r="2.5" fill="rgba(160,215,255,0.45)"/><circle cx="29.0" cy="10.9" r="2.0" fill="rgba(160,215,255,0.39)"/><circle cx="78.4" cy="6.5" r="0.8" fill="rgba(160,215,255,0.45)"/><circle cx="20.5" cy="65.4" r="1.2" fill="rgba(160,215,255,0.48)"/><circle cx="71.1" cy="58.5" r="0.8" fill="rgba(160,215,255,0.40)"/><circle cx="24.9" cy="19.3" r="0.8" fill="rgba(160,215,255,0.36)"/><circle cx="38.0" cy="40.4" r="1.2" fill="rgba(160,215,255,0.41)"/><circle cx="4.8" cy="51.8" r="0.8" fill="rgba(160,215,255,0.49)"/><circle cx="29.3" cy="13.2" r="1.2" fill="rgba(160,215,255,0.41)"/><circle cx="59.5" cy="15.0" r="1.5" fill="rgba(160,215,255,0.38)"/><circle cx="19.9" cy="25.3" r="0.8" fill="rgba(160,215,255,0.50)"/><circle cx="4.1" cy="1.3" r="2.0" fill="rgba(160,215,255,0.39)"/><circle cx="21.2" cy="34.7" r="1.5" fill="rgba(160,215,255,0.28)"/><circle cx="91.7" cy="31.5" r="1.5" fill="rgba(160,215,255,0.39)"/><circle cx="99.5" cy="70.8" r="1.2" fill="rgba(160,215,255,0.42)"/><circle cx="110.0" cy="25.0" r="2.5" fill="rgba(160,215,255,0.43)"/><circle cx="15.6" cy="72.2" r="0.8" fill="rgba(160,215,255,0.46)"/><circle cx="1.6" cy="45.7" r="1.2" fill="rgba(160,215,255,0.36)"/><circle cx="6.2" cy="48.6" r="1.5" fill="rgba(160,215,255,0.47)"/><circle cx="75.1" cy="20.6" r="1.0" fill="rgba(160,215,255,0.42)"/><circle cx="5.1" cy="13.5" r="1.2" fill="rgba(160,215,255,0.36)"/><circle cx="29.5" cy="70.2" r="2.0" fill="rgba(160,215,255,0.33)"/><circle cx="3.9" cy="64.4" r="1.0" fill="rgba(160,215,255,0.34)"/><circle cx="0.1" cy="27.9" r="1.5" fill="rgba(160,215,255,0.32)"/><circle cx="73.5" cy="18.1" r="0.8" fill="rgba(160,215,255,0.27)"/><circle cx="91.5" cy="10.5" r="2.0" fill="rgba(160,215,255,0.26)"/><circle cx="2.5" cy="22.2" r="1.0" fill="rgba(160,215,255,0.27)"/><circle cx="107.3" cy="62.3" r="1.0" fill="rgba(160,215,255,0.41)"/><circle cx="80.2" cy="64.2" r="1.5" fill="rgba(160,215,255,0.44)"/>
<path d="M32 42C42 38 52 35 70 31" stroke="#f0f8ff" stroke-width="1" fill="none"/><text x="39" y="39" font-family="Liberation Sans" font-size="8.5" font-style="italic" fill="#f4faff" letter-spacing="-0.5">ashampoo</text></svg></div><div class="a cap">ASHAMPOO</div><div class="a cap2"></div></div>
<div class="a stars" style="left:43px;top:134px"><svg width="77" height="11" style="display:block"><path transform="translate(0,0)" d="M6 0L7.5 4.1H12L8.4 6.7L9.7 11L6 8.4L2.3 11L3.6 6.7L0 4.1H4.5Z" fill="url(#sg)"/><path transform="translate(16,0)" d="M6 0L7.5 4.1H12L8.4 6.7L9.7 11L6 8.4L2.3 11L3.6 6.7L0 4.1H4.5Z" fill="url(#sg)"/><path transform="translate(32,0)" d="M6 0L7.5 4.1H12L8.4 6.7L9.7 11L6 8.4L2.3 11L3.6 6.7L0 4.1H4.5Z" fill="url(#sg)"/><path transform="translate(48,0)" d="M6 0L7.5 4.1H12L8.4 6.7L9.7 11L6 8.4L2.3 11L3.6 6.7L0 4.1H4.5Z" fill="url(#sg)"/><path transform="translate(64,0)" d="M6 0L7.5 4.1H12L8.4 6.7L9.7 11L6 8.4L2.3 11L3.6 6.7L0 4.1H4.5Z" fill="url(#sg)"/></svg></div>
<div class="a inf" style="left:-12px;top:149px">1280x960x24 - 188.41 KB<br>2008/11/26 04:19<br><u><b>Ashampoo.jpg</b></u></div>
<div class="a frm" style="left:172px;top:12px"><div class="a pho" style="background:#000"><svg class="a" style="left:0;top:0" width="112" height="73"><defs><linearGradient id="b2" x1="0" y1="0" x2="0" y2="1"><stop offset="0" stop-color="#0a1890"/><stop offset="0.45" stop-color="#2048d0"/><stop offset="0.5" stop-color="#0e1838"/><stop offset="0.6" stop-color="#10182a"/><stop offset="0.7" stop-color="#1a3848"/><stop offset="1" stop-color="#183a70"/></linearGradient></defs>
<rect width="112" height="73" fill="url(#b2)"/>
<path d="M26 30Q30 22 36 18M45 30Q48 22 54 17M60 30Q62 22 68 16M74 30Q76 22 80 15" stroke="rgba(200,210,250,.45)" stroke-width="3.5" fill="none"/>
<path d="M0 32H20V30H26V34H44V29H50V33H60V29H66V33H78V29H84V34H112V40H0Z" fill="#101420"/><circle cx="84.9" cy="35.0" r="0.7" fill="#f0d890"/><circle cx="85.2" cy="35.6" r="0.5" fill="#f0d890"/><circle cx="94.2" cy="35.9" r="1.0" fill="#f0d890"/><circle cx="76.5" cy="35.9" r="1.0" fill="#f0d890"/><circle cx="32.5" cy="35.1" r="1.0" fill="#f0d890"/><circle cx="71.2" cy="36.3" r="0.5" fill="#f0d890"/><circle cx="94.4" cy="35.3" r="1.0" fill="#f0d890"/><circle cx="81.5" cy="35.8" r="0.5" fill="#f0d890"/><circle cx="27.7" cy="33.2" r="1.0" fill="#f0d890"/><circle cx="52.5" cy="33.4" r="0.7" fill="#f0d890"/><circle cx="70.3" cy="35.5" r="1.0" fill="#f0d890"/><circle cx="67.8" cy="34.0" r="0.7" fill="#f0d890"/><circle cx="20.3" cy="36.2" r="1.0" fill="#f0d890"/><circle cx="103.9" cy="36.6" r="0.5" fill="#f0d890"/><circle cx="79.3" cy="33.3" r="1.0" fill="#f0d890"/><circle cx="62.6" cy="36.2" r="0.7" fill="#f0d890"/><circle cx="41.1" cy="36.0" r="0.5" fill="#f0d890"/><circle cx="86.6" cy="36.9" r="0.7" fill="#f0d890"/><circle cx="96.1" cy="33.3" r="1.0" fill="#f0d890"/><circle cx="45.9" cy="33.2" r="1.0" fill="#f0d890"/><circle cx="77.8" cy="33.3" r="0.5" fill="#f0d890"/><circle cx="49.9" cy="35.6" r="1.0" fill="#f0d890"/><circle cx="47.4" cy="35.3" r="0.5" fill="#f0d890"/><circle cx="63.4" cy="34.9" r="1.0" fill="#f0d890"/><circle cx="29.0" cy="33.9" r="0.7" fill="#f0d890"/>
<circle cx="91" cy="33" r="3" fill="#e8f4ff"/>
<path d="M0 44Q20 38 40 42T80 41T112 42V73H0Z" fill="#1c4c66"/><ellipse cx="32.6" cy="59.0" rx="5.8" ry="1.7" fill="#2a7a50" opacity="0.5"/><ellipse cx="111.2" cy="59.9" rx="4.9" ry="1.1" fill="#5a90e0" opacity="0.5"/><ellipse cx="2.0" cy="57.3" rx="7.9" ry="2.5" fill="#5a90e0" opacity="0.5"/><ellipse cx="111.3" cy="55.2" rx="8.5" ry="2.4" fill="#2a7a50" opacity="0.5"/><ellipse cx="65.1" cy="48.1" rx="6.1" ry="2.4" fill="#3a9a58" opacity="0.5"/><ellipse cx="67.6" cy="62.3" rx="4.7" ry="1.2" fill="#3a70c0" opacity="0.5"/><ellipse cx="25.9" cy="70.0" rx="5.9" ry="1.0" fill="#2a7a50" opacity="0.5"/><ellipse cx="106.4" cy="63.8" rx="5.4" ry="2.1" fill="#5a90e0" opacity="0.5"/><ellipse cx="38.5" cy="53.2" rx="8.0" ry="1.0" fill="#3a70c0" opacity="0.5"/><ellipse cx="94.0" cy="47.5" rx="8.6" ry="2.1" fill="#3a70c0" opacity="0.5"/><ellipse cx="28.4" cy="45.9" rx="5.3" ry="2.3" fill="#2a7a50" opacity="0.5"/><ellipse cx="40.4" cy="56.4" rx="4.7" ry="1.1" fill="#2a7a50" opacity="0.5"/><ellipse cx="5.8" cy="63.2" rx="6.8" ry="1.2" fill="#3a70c0" opacity="0.5"/><ellipse cx="48.9" cy="53.2" rx="7.6" ry="2.2" fill="#5a90e0" opacity="0.5"/><ellipse cx="99.0" cy="67.5" rx="6.8" ry="2.4" fill="#1a4a40" opacity="0.5"/><ellipse cx="61.5" cy="64.9" rx="3.3" ry="2.1" fill="#5a90e0" opacity="0.5"/><ellipse cx="68.9" cy="48.0" rx="8.2" ry="1.7" fill="#1a4a40" opacity="0.5"/><ellipse cx="14.3" cy="57.7" rx="5.1" ry="1.4" fill="#3a70c0" opacity="0.5"/><ellipse cx="45.5" cy="50.9" rx="5.9" ry="2.0" fill="#2a7a50" opacity="0.5"/><ellipse cx="18.7" cy="48.7" rx="4.2" ry="2.4" fill="#5a90e0" opacity="0.5"/><ellipse cx="61.6" cy="57.1" rx="5.0" ry="2.1" fill="#5a90e0" opacity="0.5"/><ellipse cx="15.6" cy="49.6" rx="3.5" ry="1.5" fill="#2a7a50" opacity="0.5"/><ellipse cx="35.8" cy="54.7" rx="7.9" ry="1.3" fill="#2a7a50" opacity="0.5"/><ellipse cx="84.0" cy="56.0" rx="5.5" ry="1.8" fill="#5a90e0" opacity="0.5"/><ellipse cx="30.3" cy="65.8" rx="6.0" ry="1.9" fill="#3a70c0" opacity="0.5"/><ellipse cx="14.1" cy="58.6" rx="6.8" ry="2.3" fill="#3a9a58" opacity="0.5"/><ellipse cx="10.4" cy="70.0" rx="5.3" ry="2.0" fill="#5a90e0" opacity="0.5"/><ellipse cx="106.8" cy="68.6" rx="8.2" ry="1.0" fill="#2a7a50" opacity="0.5"/><ellipse cx="47.6" cy="66.1" rx="7.8" ry="2.5" fill="#5a90e0" opacity="0.5"/><ellipse cx="0.0" cy="55.4" rx="8.6" ry="2.2" fill="#5a90e0" opacity="0.5"/><ellipse cx="108.9" cy="51.2" rx="3.7" ry="1.2" fill="#1a4a40" opacity="0.5"/><ellipse cx="108.9" cy="47.2" rx="8.0" ry="2.1" fill="#5a90e0" opacity="0.5"/><ellipse cx="9.5" cy="66.5" rx="3.0" ry="1.2" fill="#1a4a40" opacity="0.5"/><ellipse cx="103.0" cy="62.7" rx="4.8" ry="1.2" fill="#3a70c0" opacity="0.5"/><ellipse cx="59.2" cy="56.7" rx="7.6" ry="1.1" fill="#3a70c0" opacity="0.5"/><ellipse cx="58.7" cy="60.9" rx="5.3" ry="1.3" fill="#1a4a40" opacity="0.5"/><ellipse cx="0.1" cy="59.6" rx="9.0" ry="1.4" fill="#3a70c0" opacity="0.5"/><ellipse cx="72.2" cy="69.6" rx="5.9" ry="1.4" fill="#3a9a58" opacity="0.5"/><ellipse cx="3.3" cy="55.9" rx="6.9" ry="1.1" fill="#3a9a58" opacity="0.5"/><ellipse cx="55.8" cy="63.6" rx="5.5" ry="1.4" fill="#5a90e0" opacity="0.5"/>
<path d="M12 42Q18 40 24 43" stroke="#e0b070" stroke-width="1.5" fill="none"/><path d="M85 38Q92 40 100 39" stroke="#e0b070" stroke-width="1.5" fill="none"/></svg></div><div class="a cap">COAL POWER PLANT</div><div class="a cap2"></div></div>
<div class="a stars" style="left:207px;top:134px"><svg width="77" height="11" style="display:block"><path transform="translate(0,0)" d="M6 0L7.5 4.1H12L8.4 6.7L9.7 11L6 8.4L2.3 11L3.6 6.7L0 4.1H4.5Z" fill="url(#sg)"/><path transform="translate(16,0)" d="M6 0L7.5 4.1H12L8.4 6.7L9.7 11L6 8.4L2.3 11L3.6 6.7L0 4.1H4.5Z" fill="url(#sg)"/><path transform="translate(32,0)" d="M6 0L7.5 4.1H12L8.4 6.7L9.7 11L6 8.4L2.3 11L3.6 6.7L0 4.1H4.5Z" fill="url(#sg)"/><path transform="translate(48,0)" d="M6 0L7.5 4.1H12L8.4 6.7L9.7 11L6 8.4L2.3 11L3.6 6.7L0 4.1H4.5Z" fill="url(#sg)"/><path transform="translate(64,0)" d="M6 0L7.5 4.1H12L8.4 6.7L9.7 11L6 8.4L2.3 11L3.6 6.7L0 4.1H4.5Z" fill="url(#sg)"/></svg></div>
<div class="a inf" style="left:152px;top:149px">1280x960x24 - 176.93 KB<br>2008/11/26 04:19<br><u><b>CoalPowerPlant.jpg</b></u></div>
<div class="a frm" style="left:336px;top:12px"><div class="a pho" style="background:#000"><svg class="a" style="left:0;top:0" width="112" height="73"><defs><radialGradient id="a3" cx="0.5" cy="0.5" r="0.5"><stop offset="0" stop-color="#f0c870"/><stop offset="0.5" stop-color="#a07030"/><stop offset="1" stop-color="rgba(60,40,10,0)"/></radialGradient></defs>
<rect width="112" height="73" fill="#140c04"/>
<rect x="4" y="0" width="6" height="60" fill="#2e200c"/><rect x="16" y="5" width="5" height="55" fill="#241a08"/><rect x="26" y="0" width="5" height="58" fill="#33250e"/><rect x="80" y="0" width="5" height="58" fill="#33250e"/><rect x="90" y="5" width="5" height="55" fill="#241a08"/><rect x="101" y="0" width="6" height="60" fill="#2e200c"/>
<path d="M38 60V18Q56 -4 74 18V60Z" fill="#241808"/>
<ellipse cx="56" cy="40" rx="18" ry="22" fill="url(#a3)"/>
<path d="M48 50H64V60H48Z" fill="#e0b060" opacity="0.5"/>
<path d="M0 60H112V73H0Z" fill="#2e2010"/><path d="M30 73L50 60H62L82 73Z" fill="#b08848" opacity="0.75"/><path d="M0 64H40M72 64H112" stroke="#8a6430" stroke-width="1"/>
<circle cx="24" cy="53" r="4.5" fill="#4a7a2a" opacity="0.55"/><circle cx="88" cy="53" r="4.5" fill="#4a7a2a" opacity="0.55"/><circle cx="10" cy="30" r="1" fill="#ffe0a0"/><circle cx="18" cy="38" r="0.8" fill="#ffe0a0"/><circle cx="28" cy="32" r="0.8" fill="#ffe0a0"/><circle cx="84" cy="32" r="1" fill="#ffe0a0"/><circle cx="94" cy="36" r="0.8" fill="#ffe0a0"/><circle cx="102" cy="28" r="1" fill="#ffe0a0"/><circle cx="56" cy="4" r="1.5" fill="#ffe0a0"/><circle cx="80" cy="4" r="1.2" fill="#ffe0a0"/><circle cx="40" cy="20" r="0.8" fill="#ffe0a0"/><circle cx="70" cy="20" r="0.8" fill="#ffe0a0"/></svg></div><div class="a cap">VIENNA CATHEDRAL</div><div class="a cap2"></div></div>
<div class="a stars" style="left:371px;top:134px"><svg width="77" height="11" style="display:block"><path transform="translate(0,0)" d="M6 0L7.5 4.1H12L8.4 6.7L9.7 11L6 8.4L2.3 11L3.6 6.7L0 4.1H4.5Z" fill="url(#sg)"/><path transform="translate(16,0)" d="M6 0L7.5 4.1H12L8.4 6.7L9.7 11L6 8.4L2.3 11L3.6 6.7L0 4.1H4.5Z" fill="url(#sg)"/><path transform="translate(32,0)" d="M6 0L7.5 4.1H12L8.4 6.7L9.7 11L6 8.4L2.3 11L3.6 6.7L0 4.1H4.5Z" fill="url(#sg)"/><path transform="translate(48,0)" d="M6 0L7.5 4.1H12L8.4 6.7L9.7 11L6 8.4L2.3 11L3.6 6.7L0 4.1H4.5Z" fill="url(#sg)"/><path transform="translate(64,0)" d="M6 0L7.5 4.1H12L8.4 6.7L9.7 11L6 8.4L2.3 11L3.6 6.7L0 4.1H4.5Z" fill="url(#sg)"/></svg></div>
<div class="a inf" style="left:316px;top:149px">1280x960x24 - 265.01 KB<br>2008/11/26 03:29<br><u><b>Cathedral.jpg</b></u></div>
<div class="a frm" style="left:8px;top:202px"><div class="a pho" style="background:#000"><div class="a" style="left:0;top:0;width:112px;height:73px;background:radial-gradient(ellipse 30% 7% at 50% 57%,rgba(255,200,80,.8),rgba(230,120,30,0)),linear-gradient(#142a58 0%,#1e3c6c 20%,#30507a 35%,#58607a 42%,#a07048 48%,#d08838 54%,#b04820 59%,#3a2a30 63%,#2e2c34 75%,#2a2830 100%)"></div>
<div class="a" style="left:60px;top:8px;width:50px;height:20px;background:radial-gradient(ellipse 40% 25% at 50% 50%,rgba(200,170,140,.5),rgba(0,0,0,0))"></div>
<div class="a" style="left:50px;top:39px;width:12px;height:5px;border-radius:50%;background:radial-gradient(#fffce0,#f8d060 50%,rgba(240,160,40,0) 100%)"></div>
<svg class="a" style="left:0;top:0" width="112" height="73"><path d="M53 73L88 48H112V73Z" fill="#1e2440"/><path d="M53 73L88 48" stroke="#a8b0c8" stroke-width="1.2"/></svg></div><div class="a cap">FLIGHT OVER DENMARK</div><div class="a cap2"></div></div>
<div class="a stars" style="left:43px;top:325px"><svg width="77" height="11" style="display:block"><path transform="translate(0,0)" d="M6 0L7.5 4.1H12L8.4 6.7L9.7 11L6 8.4L2.3 11L3.6 6.7L0 4.1H4.5Z" fill="url(#sg)"/><path transform="translate(16,0)" d="M6 0L7.5 4.1H12L8.4 6.7L9.7 11L6 8.4L2.3 11L3.6 6.7L0 4.1H4.5Z" fill="url(#sg)"/><path transform="translate(32,0)" d="M6 0L7.5 4.1H12L8.4 6.7L9.7 11L6 8.4L2.3 11L3.6 6.7L0 4.1H4.5Z" fill="url(#sg)"/><path transform="translate(48,0)" d="M6 0L7.5 4.1H12L8.4 6.7L9.7 11L6 8.4L2.3 11L3.6 6.7L0 4.1H4.5Z" fill="url(#sg)"/><path transform="translate(64,0)" d="M6 0L7.5 4.1H12L8.4 6.7L9.7 11L6 8.4L2.3 11L3.6 6.7L0 4.1H4.5Z" fill="url(#sg)"/></svg></div>
<div class="a frm" style="left:172px;top:202px"><div class="a pho" style="background:#000"><div class="a" style="left:0;top:0;width:112px;height:73px;background:linear-gradient(#98b8d8 0%,#b0c8e4 25%,#c0d0e0 30%)"></div>
<svg class="a" style="left:0;top:0" width="112" height="73">
<path d="M0 22L112 8V30L0 36Z" fill="#e2d6bc"/><path d="M0 22L112 8V10L0 24Z" fill="#8a7a68"/>
<path d="M0 30L112 22" stroke="#c8b898" stroke-width="1"/><path d="M6 28L106 19" stroke="#7a6a58" stroke-width="1.5" stroke-dasharray="2 6"/><path d="M32 42H104M32 47H104" stroke="#5a4a40" stroke-width="1.2" stroke-dasharray="2 3" opacity="0.6"/>
<path d="M0 36L112 30V52L0 54Z" fill="#d8a870"/>
<g opacity="0.85"><rect x="30" y="33" width="10" height="20" fill="#d89070"/><rect x="40" y="32" width="12" height="21" fill="#c07858"/><rect x="52" y="31" width="14" height="22" fill="#e0c898"/><rect x="66" y="30" width="10" height="22" fill="#a0b088"/><rect x="76" y="29" width="14" height="23" fill="#e8d4a8"/><rect x="90" y="28" width="12" height="24" fill="#90b098"/></g><rect x="0" y="35" width="30" height="19" fill="#d0b890"/>
<path d="M0 30L30 28L30 36L0 37Z" fill="#b89878"/>
<circle cx="20" cy="33" r="3" fill="#5a4838"/><circle cx="12" cy="34" r="3" fill="#5a4838"/><circle cx="28" cy="32" r="3" fill="#5a4838"/>
<path d="M0 53L112 50V60H0Z" fill="#908068"/>
<path d="M0 58H112V73H0Z" fill="#6a6050"/>
<path d="M8 73V62Q22 52 38 62V73Z" fill="#403a32"/>
<path d="M0 66H50V73H0Z" fill="#8a9a68"/>
<path d="M50 73V62L70 60V73Z" fill="#5a5448"/>
<path d="M70 73Q80 52 112 56V73Z" fill="#eceef2"/>
<path d="M0 64L60 66" stroke="#b0b8a0" stroke-width="1.5"/>
</svg></div><div class="a cap">PONTE VECCHIO FLORENCE</div><div class="a cap2"></div></div>
<div class="a stars" style="left:207px;top:325px"><svg width="77" height="11" style="display:block"><path transform="translate(0,0)" d="M6 0L7.5 4.1H12L8.4 6.7L9.7 11L6 8.4L2.3 11L3.6 6.7L0 4.1H4.5Z" fill="url(#sg)"/><path transform="translate(16,0)" d="M6 0L7.5 4.1H12L8.4 6.7L9.7 11L6 8.4L2.3 11L3.6 6.7L0 4.1H4.5Z" fill="url(#sg)"/><path transform="translate(32,0)" d="M6 0L7.5 4.1H12L8.4 6.7L9.7 11L6 8.4L2.3 11L3.6 6.7L0 4.1H4.5Z" fill="url(#sg)"/><path transform="translate(48,0)" d="M6 0L7.5 4.1H12L8.4 6.7L9.7 11L6 8.4L2.3 11L3.6 6.7L0 4.1H4.5Z" fill="url(#sg)"/><path transform="translate(64,0)" d="M6 0L7.5 4.1H12L8.4 6.7L9.7 11L6 8.4L2.3 11L3.6 6.7L0 4.1H4.5Z" fill="url(#sg)"/></svg></div>
<div class="a frm" style="left:336px;top:202px"><div class="a pho" style="background:#000"><div class="a" style="left:0;top:0;width:112px;height:73px;background:linear-gradient(90deg,#2030b0 0%,#1828a8 60%,#2030b8 85%,#1a28a0 100%)"></div>
<svg class="a" style="left:0;top:0" width="112" height="73">
<defs><radialGradient id="fy" cx="0.4" cy="0.4" r="0.7"><stop offset="0" stop-color="#f0ec90"/><stop offset="0.6" stop-color="#e0d860"/><stop offset="1" stop-color="#c8c040"/></radialGradient></defs>
<path d="M0 0H38L48 4L54 14L52 24L62 30L68 42L66 56L58 64L40 66L26 58L0 56Z" fill="url(#fy)"/><path d="M4 4L30 2M6 10L36 6M8 16L40 12" stroke="#f4f0b0" stroke-width="1" opacity="0.7"/>
<path d="M0 0H40L30 10L0 8Z" fill="#f4f0c8"/>
<path d="M56 24L62 20" stroke="#e8c8a0" stroke-width="2"/>
<path d="M44 48Q52 40 60 48" stroke="#c8a858" stroke-width="1.5" fill="none"/>
<path d="M0 58Q10 52 20 56T40 54T60 52L72 56V73H0Z" fill="#98d078"/><circle cx="32.6" cy="63.8" r="4.3" fill="#e8fcd8"/><circle cx="32.5" cy="70.0" r="2.5" fill="#a8e088"/><circle cx="34.3" cy="64.9" r="2.5" fill="#e8fcd8"/><circle cx="21.8" cy="53.9" r="4.0" fill="#d8f8c0"/><circle cx="42.9" cy="60.3" r="3.1" fill="#a8e088"/><circle cx="46.8" cy="65.1" r="4.1" fill="#d8f8c0"/><circle cx="4.3" cy="56.0" r="2.6" fill="#d8f8c0"/><circle cx="56.0" cy="58.9" r="3.5" fill="#b8e898"/><circle cx="37.4" cy="65.4" r="3.2" fill="#d8f8c0"/><circle cx="32.9" cy="57.8" r="4.5" fill="#d8f8c0"/><circle cx="51.0" cy="58.6" r="2.6" fill="#98d078"/><circle cx="2.1" cy="63.8" r="2.3" fill="#d8f8c0"/><circle cx="61.0" cy="60.1" r="4.4" fill="#d8f8c0"/><circle cx="15.4" cy="71.5" r="2.1" fill="#e8fcd8"/><circle cx="70.6" cy="60.3" r="2.2" fill="#b8e898"/><circle cx="56.1" cy="57.7" r="2.2" fill="#98d078"/><circle cx="1.1" cy="60.6" r="4.3" fill="#b8e898"/><circle cx="17.7" cy="54.1" r="2.1" fill="#e8fcd8"/><circle cx="12.8" cy="63.7" r="3.1" fill="#b8e898"/><circle cx="70.9" cy="68.2" r="3.0" fill="#e8fcd8"/><circle cx="8.4" cy="60.8" r="2.5" fill="#98d078"/><circle cx="62.2" cy="72.5" r="3.5" fill="#d8f8c0"/><circle cx="15.2" cy="60.3" r="4.1" fill="#a8e088"/><circle cx="7.2" cy="72.8" r="2.5" fill="#98d078"/><circle cx="0.7" cy="64.8" r="4.1" fill="#e8fcd8"/><circle cx="5.3" cy="53.9" r="3.5" fill="#b8e898"/><circle cx="1.1" cy="59.7" r="3.6" fill="#b8e898"/><circle cx="69.1" cy="62.2" r="3.4" fill="#e8fcd8"/><circle cx="13.2" cy="55.2" r="4.3" fill="#a8e088"/><circle cx="18.0" cy="56.0" r="3.8" fill="#a8e088"/><circle cx="14.2" cy="72.0" r="4.2" fill="#a8e088"/><circle cx="5.7" cy="53.0" r="2.3" fill="#a8e088"/><circle cx="69.3" cy="57.0" r="3.8" fill="#98d078"/><circle cx="30.3" cy="71.0" r="3.2" fill="#a8e088"/><circle cx="12.6" cy="67.1" r="2.2" fill="#b8e898"/><circle cx="34.5" cy="65.7" r="3.5" fill="#d8f8c0"/><circle cx="20.2" cy="71.3" r="2.5" fill="#d8f8c0"/><circle cx="5.0" cy="60.6" r="2.6" fill="#d8f8c0"/><circle cx="12.7" cy="59.7" r="3.4" fill="#b8e898"/><circle cx="6.6" cy="54.9" r="3.1" fill="#98d078"/><circle cx="47.3" cy="66.5" r="3.5" fill="#b8e898"/><circle cx="42.5" cy="71.4" r="3.2" fill="#98d078"/><circle cx="50.5" cy="72.2" r="2.1" fill="#d8f8c0"/><circle cx="34.7" cy="67.3" r="2.8" fill="#d8f8c0"/><circle cx="5.4" cy="63.5" r="3.8" fill="#b8e898"/><path d="M76 73Q86 58 100 62L112 66V73Z" fill="#d8b0d0"/>
<path d="M90 62L96 52L100 60Z" fill="#5a8a40"/>
</svg></div><div class="a cap">TAENIANOTUS TRIACANTHUS</div><div class="a cap2"></div></div>
<div class="a stars" style="left:371px;top:325px"><svg width="77" height="11" style="display:block"><path transform="translate(0,0)" d="M6 0L7.5 4.1H12L8.4 6.7L9.7 11L6 8.4L2.3 11L3.6 6.7L0 4.1H4.5Z" fill="url(#sg)"/><path transform="translate(16,0)" d="M6 0L7.5 4.1H12L8.4 6.7L9.7 11L6 8.4L2.3 11L3.6 6.7L0 4.1H4.5Z" fill="url(#sg)"/><path transform="translate(32,0)" d="M6 0L7.5 4.1H12L8.4 6.7L9.7 11L6 8.4L2.3 11L3.6 6.7L0 4.1H4.5Z" fill="url(#sg)"/><path transform="translate(48,0)" d="M6 0L7.5 4.1H12L8.4 6.7L9.7 11L6 8.4L2.3 11L3.6 6.7L0 4.1H4.5Z" fill="url(#sg)"/><path transform="translate(64,0)" d="M6 0L7.5 4.1H12L8.4 6.7L9.7 11L6 8.4L2.3 11L3.6 6.7L0 4.1H4.5Z" fill="url(#sg)"/></svg></div>
 </div>

 <div class="a" style="left:917px;top:229px;width:18px;height:335px;background:#f6f4ec;border-left:1px solid #e8e8e0"></div>
 <div class="a xpb" style="left:918px;top:232px;width:15px;height:15px"><svg width="15" height="15"><path d="M4 9L7.5 5.5L11 9" stroke="#4d6185" stroke-width="2.3" fill="none"/></svg></div>
 <div class="a xpb" style="left:918px;top:249px;width:15px;height:72px"><div class="a" style="left:4px;top:32px;width:6px;height:7px;background:repeating-linear-gradient(#a8bce8 0 1px,#eef2fc 1px 2px)"></div></div>
 <div class="a xpb" style="left:918px;top:548px;width:15px;height:15px"><svg width="15" height="15"><path d="M4 6L7.5 9.5L11 6" stroke="#4d6185" stroke-width="2.3" fill="none"/></svg></div>
 <!-- splitters -->
 <div class="a hdl" style="left:223px;top:311px"><svg class="a" style="left:0;top:24px" width="7" height="10"><path d="M1 5L6 1V9Z" fill="#fff"/></svg></div>
 <div class="a hdl" style="left:396px;top:311px"><svg class="a" style="left:0;top:24px" width="7" height="10"><path d="M6 5L1 1V9Z" fill="#fff"/></svg></div>
 <div class="a" style="left:284px;top:566px;width:59px;height:8px;background:linear-gradient(90deg,#c4c4c4 0%,#a0a0a0 25%,#6a6a6a 42%,#2a2a2a 52%,#262626 80%,#444 100%)"><svg class="a" style="left:24px;top:1px" width="9" height="6"><path d="M4.5 0L9 5H0Z" fill="#fff"/></svg></div>
 <!-- status -->
 <div class="a" style="left:6px;top:571px;font:12px 'Liberation Serif',serif;color:#a8aaae;white-space:nowrap;letter-spacing:-0.21px">[C:\Documents and Settings\All Users\Documents\My Pictures\Ashampoo Pictures] - [19]</div>
 <div class="a" style="left:886px;top:572px;font:bold 12px/12px 'Liberation Sans',sans-serif;color:#c4c4c4;white-space:nowrap;letter-spacing:-0.2px">APC<span style="color:#fff;font-size:14px">7</span></div>
 <svg class="a" style="left:922px;top:571px" width="12" height="12"><rect x="9" y="0" width="2" height="2" fill="#d8d8d8"/><rect x="6" y="3" width="2" height="2" fill="#d8d8d8"/><rect x="9" y="3" width="2" height="2" fill="#d8d8d8"/><rect x="3" y="6" width="2" height="2" fill="#d8d8d8"/><rect x="6" y="6" width="2" height="2" fill="#d8d8d8"/><rect x="9" y="6" width="2" height="2" fill="#d8d8d8"/><rect x="0" y="9" width="2" height="2" fill="#d8d8d8"/><rect x="3" y="9" width="2" height="2" fill="#d8d8d8"/><rect x="6" y="9" width="2" height="2" fill="#d8d8d8"/><rect x="9" y="9" width="2" height="2" fill="#d8d8d8"/></svg>
 <!-- logo -->
 <div class="a" style="left:785px;top:51px;width:141px;height:27px;border-radius:4px;background:linear-gradient(#0a2430 0%,#0e3e50 35%,#2a88a8 75%,#58c8e8 100%)"></div>
 <div class="a" style="left:842px;top:50px;font:11px 'Liberation Sans',sans-serif;color:#c8d0d8;letter-spacing:-0.4px;transform:scaleX(0.95);transform-origin:0 0;white-space:nowrap">Ashampoo<span style="font-size:7px;vertical-align:4px;font-weight:bold">®</span></div>
 <div class="a" style="left:789px;top:59px;font:17px/17px 'Liberation Sans',sans-serif;color:#fff;white-space:nowrap;transform:scaleX(0.865);transform-origin:0 0;text-shadow:0 0 1px rgba(0,0,0,.5)"><b>Photo</b>Commander</div>
 <div class="a" style="left:904px;top:50px;font:italic bold 27px/27px 'Liberation Sans',sans-serif;color:#fff">7</div>
 <div class="a" style="left:932px;top:49px;width:3px;height:35px;background:#ece6d0"></div>
 <div id="white4" class="a"></div>
</div>
</body></html>
